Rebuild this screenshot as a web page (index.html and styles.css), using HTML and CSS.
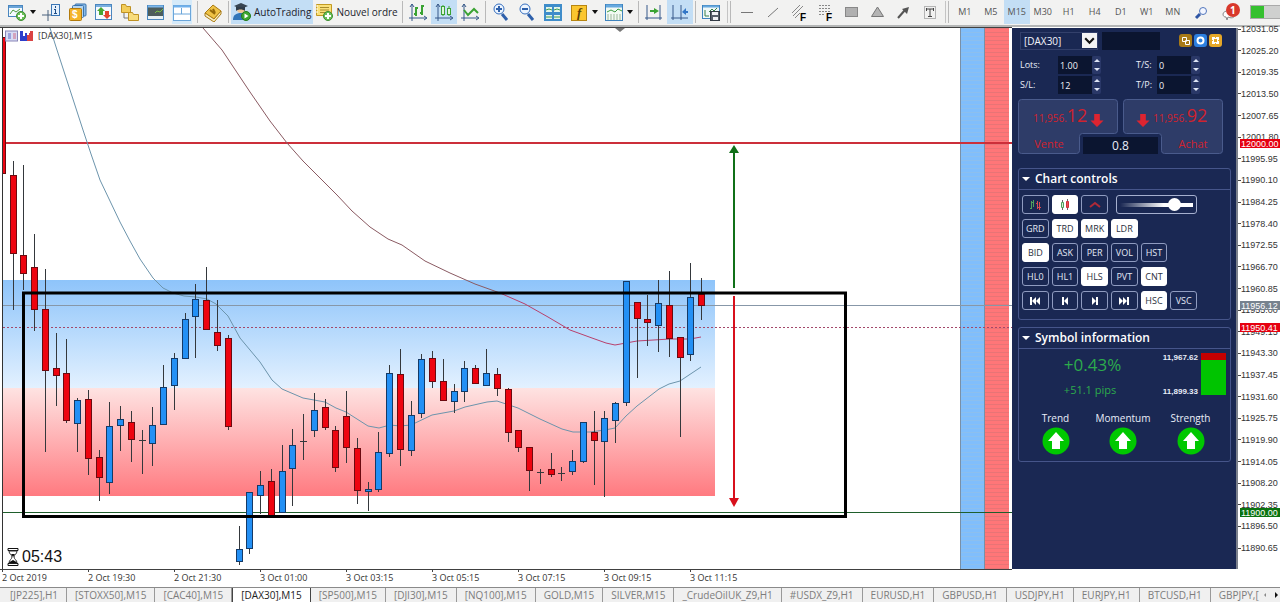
FILE: index.html
```html
<!DOCTYPE html>
<html lang="fr">
<head>
<meta charset="utf-8">
<title>[DAX30],M15</title>
<link rel="stylesheet" href="styles.css">
</head>
<body>
<header class="toolbar">
  <button class="tool wide" aria-label="Nouveau graphique"><svg class="ico" viewBox="0 0 20 20"><rect x="1.500" y="3.500" width="14" height="11" fill="#f4faff" stroke="#4a86bf"/><path d="M2 5h13" stroke="#6aa5d8" stroke-width="2"/><path d="M3 12l3-4 3 2 4-3" fill="none" stroke="#4a9b3c"/><circle cx="14" cy="14" r="4.500" fill="#6abf58" stroke="#3d8d32"/><path d="M14 11v6M11 14h6" stroke="#fff" stroke-width="2"/></svg><span class="caret"></span></button>
  <button class="tool" aria-label="Fenêtre de données"><svg class="ico" viewBox="0 0 20 20"><path d="M6 8v11M0 13h12" stroke="#48607c"/><rect x="9.500" y="2.500" width="8" height="11" fill="#e5f1fd" stroke="#3a76b5"/><path d="M13.500 7v4M13.500 4v2M12 11.500h3M12 7.500h2" stroke="#1d4c86"/></svg></button>
  <button class="tool" aria-label="Symboles"><svg class="ico" viewBox="0 0 20 20"><rect x="7" y="2" width="11" height="12" rx="1" fill="#8bbce8" stroke="#3973ad"/><rect x="4.500" y="3.500" width="11" height="12" rx="1" fill="#b6d6f1" stroke="#3973ad"/><rect x="1.500" y="6.500" width="12" height="12" rx="1" fill="#f4b429" stroke="#b37b0c"/><text x="4" y="16" class="glyph white">$</text></svg></button>
  <button class="tool" aria-label="Observation du marché"><svg class="ico" viewBox="0 0 20 20"><rect x="1.500" y="2.500" width="16" height="15" fill="#f5faff" stroke="#4a86bf"/><path d="M2 4h15" stroke="#79afe0" stroke-width="2"/><path d="M7 5l4 4H9v4H5V9H3z" fill="#48a634"/><path d="M13 17l4-4h-2V9h-4v4H9z" fill="#e3452f"/></svg></button>
  <button class="tool" aria-label="Navigateur"><svg class="ico" viewBox="0 0 20 20"><path d="M1.500 2.500h4l1 2h4v6h-9z" fill="#f3cd59" stroke="#bf9224"/><path d="M4 11v5h5" fill="none" stroke="#777"/><path d="M8.500 10.500h4l1 2h5v6h-10z" fill="#f8dc7c" stroke="#bf9224"/></svg></button>
  <button class="tool" aria-label="Boîte à outils"><svg class="ico" viewBox="0 0 20 20"><rect x="1.500" y="3.500" width="16" height="14" fill="#4d5d5c" stroke="#4d89bf"/><path d="M2 4.500h15" stroke="#7db7ea" stroke-width="2"/><path d="M9 11l2-2 3 1 3-3" fill="none" stroke="#7ac142"/><path d="M2 14h15v3H2z" fill="#e9f2f4"/></svg></button>
  <button class="tool boxed" aria-label="Testeur"><svg class="ico" viewBox="0 0 20 20"><rect x="1.500" y="3.500" width="17" height="15" fill="#fff" stroke="#6ba6da"/><path d="M2 4.500h16" stroke="#6eb0ec" stroke-width="2"/><path d="M2 12h16M9.500 6v6" stroke="#6ba6da"/></svg></button>
  <span class="sep"></span>
  <button class="tool" aria-label="MetaEditor"><svg class="ico" viewBox="0 0 20 20"><path d="M2 11l8-8 8 6-7 8z" fill="#eec245" stroke="#a97a12"/><path d="M2 11v3l9 6 7-8V9l-7 8z" fill="#f9eec0" stroke="#a97a12"/><path d="M7 8l5 4M10 7l2 4" stroke="#946909" stroke-width="2"/></svg></button>
  <span class="sep"></span>
  <button class="tool labelled on"><svg class="ico" viewBox="0 0 20 20"><circle cx="9" cy="7" r="4" fill="#f1c594"/><path d="M2 4l7-3 7 3-7 3z" fill="#374553"/><path d="M4 5v4c2-2 7-2 9 0V5" fill="#2f3c49"/><path d="M1 18c0-5 3-7 8-7s7 2 7 7z" fill="#3276b9"/><circle cx="14" cy="14" r="4.500" fill="#3da630" stroke="#227b1a"/><path d="M12.500 11.500l4 2.500-4 2.500z" fill="#fff"/></svg><span>AutoTrading</span></button>
  <button class="tool labelled"><svg class="ico" viewBox="0 0 20 20"><path d="M2.500 2.500h15v11h-15z" fill="#fae079" stroke="#c29a22"/><path d="M2 4h2M2 7h2M2 10h2" stroke="#fff"/><path d="M6 5.500h9M6 8h9M6 10.500h6" stroke="#a98c2c"/><circle cx="14" cy="14" r="4.500" fill="#6abf58" stroke="#3d8d32"/><path d="M14 11v6M11 14h6" stroke="#fff" stroke-width="2"/></svg><span>Nouvel ordre</span></button>
  <span class="sep"></span>
  <button class="tool" aria-label="Barres"><svg class="ico" viewBox="0 0 20 20"><path class="axes" d="M4 2v17M1 16h17M2 5l2-3 2 3M16 14l3 2-3 2"/><path d="M8 5v9M6 12h2M8 6h2M14 3v10M12 11h2M14 4h2" stroke="#3ba333" stroke-width="2" fill="none"/></svg></button>
  <button class="tool on" aria-label="Chandeliers"><svg class="ico" viewBox="0 0 20 20"><path class="axes" d="M4 2v17M1 16h17M2 5l2-3 2 3M16 14l3 2-3 2"/><path d="M9 3v11M15 4v10" stroke="#3ba333"/><rect x="7.500" y="4.500" width="3" height="8" fill="#dff5da" stroke="#3ba333"/><rect x="13.500" y="6.500" width="3" height="6" fill="#dff5da" stroke="#3ba333"/></svg></button>
  <button class="tool" aria-label="Ligne"><svg class="ico" viewBox="0 0 20 20"><path class="axes" d="M4 2v17M1 16h17M2 5l2-3 2 3M16 14l3 2-3 2"/><path d="M4 8l4 5 6-6 4 4" fill="none" stroke="#3ba333" stroke-width="2"/></svg></button>
  <span class="sep"></span>
  <button class="tool" aria-label="Zoom avant"><svg class="ico" viewBox="0 0 20 20"><path d="M11 12l5 6" stroke="#2e60ab" stroke-width="3"/><circle cx="8" cy="7" r="5" fill="#edf5ff" stroke="#356ebe"/><path d="M8 4v6M5 7h6" stroke="#2e60ab" stroke-width="2"/></svg></button>
  <button class="tool" aria-label="Zoom arrière"><svg class="ico" viewBox="0 0 20 20"><path d="M11 12l5 6" stroke="#2e60ab" stroke-width="3"/><circle cx="8" cy="7" r="5" fill="#edf5ff" stroke="#356ebe"/><path d="M5 7h6" stroke="#2e60ab" stroke-width="2"/></svg></button>
  <button class="tool" aria-label="Mosaïque"><svg class="ico" viewBox="0 0 20 20"><rect x="1" y="2" width="18" height="17" fill="#3f8dca"/><path d="M3 5h6v5H3zM11 5h6v5h-6zM3 13h6v4H3zM11 13h6v4h-6z" fill="#e4f5e8"/><path d="M3 8l3-1 3 1M11 8l3-1 3 1M3 15h6M11 15h6" fill="none" stroke="#3c9a54"/></svg></button>
  <button class="tool wide" aria-label="Indicateurs"><svg class="ico" viewBox="0 0 20 20"><rect x="2.500" y="3.500" width="15" height="15" fill="#fbc62f" stroke="#b78612"/><text x="8" y="15" class="glyph fx">f</text></svg><span class="caret"></span></button>
  <button class="tool wide" aria-label="Modèles"><svg class="ico" viewBox="0 0 20 20"><rect x="1.500" y="2.500" width="17" height="16" fill="#f2faf3" stroke="#3e83bd"/><path d="M2 4h16" stroke="#67a9df" stroke-width="3"/><path d="M3 10l4-2 4 2 3-3 4 2" fill="none" stroke="#3c9c40"/><path d="M3 13h15M3 15h15M3 17h15" stroke="#9db79c" stroke-dasharray="2 1"/></svg><span class="caret"></span></button>
  <span class="sep"></span>
  <button class="tool" aria-label="Décalage"><svg class="ico" viewBox="0 0 20 20"><path class="axes" d="M3 3v15M1 16h17M16 3v15"/><path d="M6 8h4V6l5 3-5 3v-2H6z" fill="#3ba333"/></svg></button>
  <button class="tool on" aria-label="Défilement"><svg class="ico" viewBox="0 0 20 20"><path class="axes" d="M3 3v15M1 16h17M11 3v15"/><path d="M18 9h-2V6l-4 4 4 3v-2h2z" fill="#3376c6"/></svg></button>
  <span class="sep"></span>
  <button class="tool" aria-label="Enregistrer le modèle"><svg class="ico" viewBox="0 0 20 20"><rect x="1.500" y="3.500" width="17" height="13" fill="#eff8f8" stroke="#3e83bd"/><path d="M2 4.500h16" stroke="#67a9df" stroke-width="2"/><path d="M4 8v6h4M8 10l3-3 2 2 3-3" fill="none" stroke="#3a804a"/><rect x="9.500" y="9.500" width="9" height="9" fill="#57606b" stroke="#333b45"/><path d="M11 10h6v3h-6zM12 15h5v3h-5z" fill="#f0f2f5"/></svg></button>
  <span class="grip"></span>
  <button class="tool" aria-label="Ligne horizontale"><svg class="ico" viewBox="0 0 20 20"><path d="M4 10.500h12" stroke="#777"/></svg></button>
  <button class="tool" aria-label="Ligne de tendance"><svg class="ico" viewBox="0 0 20 20"><path d="M5 15L15 6" stroke="#777"/></svg></button>
  <button class="tool" aria-label="Canal Fibonacci"><svg class="ico" viewBox="0 0 20 20"><path d="M3 11l8-8M4 14l10-10M6 16l5-5" stroke="#888"/><text x="11" y="19" class="glyph">F</text></svg></button>
  <button class="tool" aria-label="Retracement Fibonacci"><svg class="ico" viewBox="0 0 20 20"><path d="M4 3.500h12M4 6.500h12M4 9.500h12M4 12.500h6" stroke="#888" stroke-dasharray="2 1"/><text x="11" y="19" class="glyph">F</text></svg></button>
  <button class="tool" aria-label="Rectangle"><svg class="ico" viewBox="0 0 20 20"><rect x="4.500" y="5.500" width="12" height="9" fill="#b0b0b0" stroke="#888"/></svg></button>
  <button class="tool" aria-label="Triangle"><svg class="ico" viewBox="0 0 20 20"><path d="M10.500 5l6 9.500h-12z" fill="#b4b4b4" stroke="#777"/></svg></button>
  <button class="tool" aria-label="Flèche"><svg class="ico" viewBox="0 0 20 20"><path d="M5 16l7-8" stroke="#555" stroke-width="2"/><path d="M16 5l-2 7-5-5z" fill="#555"/></svg></button>
  <button class="tool" aria-label="Texte"><svg class="ico" viewBox="0 0 20 20"><rect x="5.500" y="4.500" width="11" height="12" fill="none" stroke="#777" stroke-dasharray="1 1"/><path d="M7 7h8M11 7v8M9 14.500h4M7.500 6v3M14.500 6v3" stroke="#444"/></svg></button>
  <span class="grip"></span>
  <button class="tool tf">M1</button><button class="tool tf">M5</button><button class="tool tf on">M15</button><button class="tool tf">M30</button><button class="tool tf">H1</button><button class="tool tf">H4</button><button class="tool tf">D1</button><button class="tool tf">W1</button><button class="tool tf">MN</button>
  <button class="tool search" aria-label="Rechercher"><svg class="ico" viewBox="0 0 20 20"><path d="M5 16l4-4" stroke="#2e55a4" stroke-width="3"/><circle cx="12" cy="9" r="3.500" fill="#f3f6ff" stroke="#5276bc"/></svg></button>
  <button class="tool mail" aria-label="1 message"><svg class="ico" viewBox="0 0 20 20"><path d="M2 12c0-4 12-5 12 0s-5 4-7 3l-1 3-1-3c-2 0-3-1-3-3z" fill="#fff" stroke="#888"/></svg><span class="badge">1</span></button>
  <span class="meter"></span>
</header>

<main class="workspace">
  <section class="chart">
    <svg class="plot" id="plot" viewBox="0 27 1012 543" preserveAspectRatio="none" role="img" aria-label="DAX30, 15 minutes">
      <defs>
        <linearGradient id="up" x1="0" y1="0" x2="0" y2="1"><stop offset="0" stop-color="#8ec4fa"/><stop offset="1" stop-color="#e3f1ff"/></linearGradient>
        <linearGradient id="down" x1="0" y1="0" x2="0" y2="1"><stop offset="0" stop-color="#fee3e2"/><stop offset="1" stop-color="#ff7a80"/></linearGradient>
        <pattern id="ladderBlue" width="24" height="4" patternUnits="userSpaceOnUse"><rect width="24" height="4" fill="#80befc"/><rect width="24" height="1" fill="#8cbfee"/></pattern>
        <pattern id="ladderRed" width="24" height="4" patternUnits="userSpaceOnUse"><rect width="24" height="4" fill="#ff7678"/><rect width="24" height="1" fill="#e87476"/></pattern>
      </defs>
      <rect x="3" y="280" width="712" height="108" fill="url(#up)"/>
      <rect x="3" y="388" width="712" height="108" fill="url(#down)"/>
      <rect x="960" y="28" width="25" height="541" fill="url(#ladderBlue)"/>
      <rect x="985" y="28" width="24" height="541" fill="url(#ladderRed)"/>
      <path d="M960.500 28v541M984.500 28v541" stroke="#7890a8"/>
      <path d="M3 305.500h1009" stroke="#8797a8"/>
      <path d="M3 327.500h1009" stroke="#a4486a" stroke-dasharray="2 2"/>
      <path d="M3 143h1009" stroke="#cc2f3a" stroke-width="2"/>
      <path d="M3 512.500h1009" stroke="#1f5f2c"/>
      <path d="M50 28L57 50 83 130 91 154 100 180 110 201 120 222 130 241 140 259 153 278 163 288 173 293 184 296 196 297 207 299 216 304 228 316 240 338 260 362 272 380 282 389 303 398 325 402 336 408 346 412 368 426 379 428 390 425 400 426 411 425 432 415 454 411 465 407 487 402 497 401 518 408 540 419 562 429 573 432 590 432 605 430 615 428 626 416 637 406 659 389 669 384 680 381 701 367" fill="none" stroke="#6c94ac"/>
      <path d="M203 28L222 50 236 71 250 92 270 121 287 143 303 161 320 178 337 195 352 211 370 227 388 239 402 245 425 261 450 273 475 284 500 293" fill="none" stroke="#8a5a62"/>
      <path d="M500 293L525 304 548 317 570 330 592 338 606 343 615 345 637 341 670 339 690 339 701 337" fill="none" stroke="#b8406c"/>
      <g id="candles"></g>
      <rect x="23.500" y="293" width="822" height="223.500" fill="none" stroke="#000" stroke-width="3"/>
      <path d="M734 150v138" stroke="#107018" stroke-width="2"/><path d="M734 145l5 8h-10z" fill="#107018"/>
      <path d="M734 296v204" stroke="#d8101c" stroke-width="2"/><path d="M734 507l5-9h-10z" fill="#d8101c"/>
      <path d="M615 28h10l-5 4z" fill="#777"/>
      <path d="M0 27.500h1012M0 569.500h1012" stroke="#404040"/><path d="M2.500 28v541" stroke="#333"/>
    </svg>
    <div class="chart-title">
      <svg class="mini" viewBox="0 0 28 12"><rect x=".5" y="1" width="12" height="10" fill="#d7dcf4" stroke="#8a86b8"/><path d="M3 4h3M3 6h3M3 8h3" stroke="#5d69c9"/><path d="M8 4h3M8 6h3M8 8h3" stroke="#d06a86"/><path d="M15 1h3v5h2V3h2v8h-7z" fill="#2d3ecb"/><path d="M22 5h2V3h1V1h3v10h-6z" fill="#d94343"/></svg>
      <span>[DAX30],M15</span>
    </div>
    <div class="timer">
      <svg class="glass" viewBox="0 0 12 20"><path d="M1 1.500h10v2H1zM1 16.500h10v2H1z" fill="#fff" stroke="#111"/><path d="M2 4c0 3 3 4 3 6s-3 3-3 6h8c0-3-3-4-3-6s3-3 3-6z" fill="#fff" stroke="#333"/><path d="M4 7h4l-2 3zM2 16c1-2 3-2 4-3 1 1 3 1 4 3z" fill="#111"/></svg>
      <span>05:43</span>
    </div>
  </section>

  <aside class="panel">
    <form class="order">
      <div class="symbol-row">
        <label class="symbol"><span class="sr">Symbole</span><select><option>[DAX30]</option></select><svg class="drop" viewBox="0 0 14 14"><path d="M3 5l4 4 4-4" fill="none" stroke="#111" stroke-width="2"/></svg></label>
        <input class="field filter" aria-label="Filtre">
        <span class="badges">
          <button type="button" class="badge-btn brown" aria-label="Copier"><svg viewBox="0 0 13 13"><path d="M3.500 3.500h4v4h-4zM6.500 6.500h4v4h-4z" fill="none" stroke="#fff"/></svg></button>
          <button type="button" class="badge-btn blue" aria-label="Réglages"><svg viewBox="0 0 13 13"><circle cx="6.500" cy="6.500" r="3" fill="none" stroke="#fff" stroke-width="2"/></svg></button>
          <button type="button" class="badge-btn gold" aria-label="Agrandir"><svg viewBox="0 0 13 13"><path d="M3 3h3v1h1V3h3v3H9v1h1v3H7V9H6v1H3V7h1V6H3z" fill="#fff"/><rect x="5" y="5" width="3" height="3" fill="#e5a728"/></svg></button>
        </span>
      </div>
      <div class="params">
        <label for="lots">Lots:</label><span class="spin"><input class="field" id="lots" value="1.00"><i class="steps"></i></span>
        <label for="ts">T/S:</label><span class="spin"><input class="field" id="ts" value="0"><i class="steps"></i></span>
        <label for="sl">S/L:</label><span class="spin"><input class="field" id="sl" value="12"><i class="steps"></i></span>
        <label for="tp">T/P:</label><span class="spin"><input class="field" id="tp" value="0"><i class="steps"></i></span>
      </div>
      <div class="deal">
        <button type="button" class="side sell">
          <svg class="shape" viewBox="0 0 100 56"><path d="M3.500.5h93q3 0 3 3v28q0 3-3 3h-32q-3 0-3 3v14q0 3-3 3h-55q-3 0-3-3v-48q0-3 3-3z"/></svg>
          <span class="quote"><span>11,956.</span><b>12</b><svg class="arrow" viewBox="0 0 14 16"><path d="M4 1h6v7h4l-7 7-7-7h4z"/></svg></span><span class="verb">Vente</span>
        </button>
        <button type="button" class="side buy">
          <svg class="shape" viewBox="0 0 100 56"><path d="M3.500.5h93q3 0 3 3v48q0 3-3 3h-55q-3 0-3-3v-14q0-3-3-3h-32q-3 0-3-3v-28q0-3 3-3z"/></svg>
          <span class="quote"><svg class="arrow" viewBox="0 0 14 16"><path d="M4 1h6v7h4l-7 7-7-7h4z"/></svg><span>11,956.</span><b>92</b></span><span class="verb">Achat</span>
        </button>
        <output class="spread">0.8</output>
      </div>
    </form>

    <section class="group">
      <h2>Chart controls</h2>
      <div class="keys">
        <button class="key" aria-label="Barres"><svg viewBox="0 0 12 12"><path d="M2.500 2v8M1 9.500h1M3 3.500h2M4.500 1v7" stroke="#4fa05c" fill="none"/><path d="M8.500 2v8M7 4.500h1M10.500 3v8M9 8.500h3" stroke="#d64a52" fill="none"/></svg></button>
        <button class="key lit" aria-label="Chandeliers"><svg viewBox="0 0 12 12"><path d="M3.500 1v10M8.500 0v11" stroke="#666"/><path d="M2.500 3.500h2v5h-2z" fill="#d8f0d8" stroke="#4fa05c"/><path d="M7.500 2.500h2v6h-2z" fill="#e85058" stroke="#d03038"/></svg></button>
        <button class="key" aria-label="Ligne"><svg viewBox="0 0 12 12"><path d="M1 8l5-4 5 4" fill="none" stroke="#b02a38" stroke-width="2"/></svg></button>
        <span class="slider"><input type="range" aria-label="Zoom" min="0" max="100" value="80"></span>
        <button class="key c1">GRD</button><button class="key lit">TRD</button><button class="key lit">MRK</button><button class="key lit">LDR</button>
        <button class="key lit c1">BID</button><button class="key">ASK</button><button class="key">PER</button><button class="key">VOL</button><button class="key">HST</button>
        <button class="key c1">HL0</button><button class="key">HL1</button><button class="key lit">HLS</button><button class="key">PVT</button><button class="key lit">CNT</button>
        <button class="key c1" aria-label="Début"><svg viewBox="0 0 12 12"><path d="M1 2h2v8H1zM7 2v8L3 6zM11 2v8L7 6z" fill="#fff"/></svg></button>
        <button class="key" aria-label="Précédent"><svg viewBox="0 0 12 12"><path d="M3 2h2v8H3zM9 2v8L5 6z" fill="#fff"/></svg></button>
        <button class="key" aria-label="Suivant"><svg viewBox="0 0 12 12"><path d="M7 2h2v8H7zM3 2v8l4-4z" fill="#fff"/></svg></button>
        <button class="key" aria-label="Fin"><svg viewBox="0 0 12 12"><path d="M9 2h2v8H9zM5 2v8l4-4zM1 2v8l4-4z" fill="#fff"/></svg></button>
        <button class="key lit">HSC</button><button class="key">VSC</button>
      </div>
    </section>

    <section class="group info">
      <h2>Symbol information</h2>
      <div class="stats">
        <div class="change"><span class="percent">+0.43%</span><span class="pips">+51.1 pips</span></div>
        <div class="range"><span>11,967.62</span><span>11,899.33</span></div>
        <div class="bar"></div>
      </div>
      <div class="signals">
        <div class="signal">Trend<svg viewBox="0 0 28 28"><circle cx="14" cy="14" r="13.500"/><path d="M14 5l8 9h-4v8h-8v-8H6z"/></svg></div>
        <div class="signal">Momentum<svg viewBox="0 0 28 28"><circle cx="14" cy="14" r="13.500"/><path d="M14 5l8 9h-4v8h-8v-8H6z"/></svg></div>
        <div class="signal">Strength<svg viewBox="0 0 28 28"><circle cx="14" cy="14" r="13.500"/><path d="M14 5l8 9h-4v8h-8v-8H6z"/></svg></div>
      </div>
    </section>
  </aside>

  <div class="prices">
    <div class="scale"><span>12031.05</span><span>12025.20</span><span>12019.35</span><span>12013.50</span><span>12007.65</span><span>12001.80</span><span>11995.95</span><span>11990.10</span><span>11984.25</span><span>11978.40</span><span>11972.55</span><span>11966.70</span><span>11960.85</span><span>11955.00</span><span>11949.15</span><span>11943.30</span><span>11937.45</span><span>11931.60</span><span>11925.75</span><span>11919.90</span><span>11914.05</span><span>11908.20</span><span>11902.35</span><span>11896.50</span><span>11890.65</span></div>
    <span class="tag red resistance">12000.00</span>
    <span class="tag grey bid">11956.12</span>
    <span class="tag red pivot">11950.41</span>
    <span class="tag green support">11900.00</span>
  </div>
</main>

<div class="times"><span>2 Oct 2019</span><span>2 Oct 19:30</span><span>2 Oct 21:30</span><span>3 Oct 01:00</span><span>3 Oct 03:15</span><span>3 Oct 05:15</span><span>3 Oct 07:15</span><span>3 Oct 09:15</span><span>3 Oct 11:15</span></div>

<nav class="tabs">
  <div class="tab-list"><a href="#">[JP225],H1</a><a href="#">[STOXX50],M15</a><a href="#">[CAC40],M15</a><a href="#" class="current">[DAX30],M15</a><a href="#">[SP500],M15</a><a href="#">[DJI30],M15</a><a href="#">[NQ100],M15</a><a href="#">GOLD,M15</a><a href="#">SILVER,M15</a><a href="#">_CrudeOilUK_Z9,H1</a><a href="#">#USDX_Z9,H1</a><a href="#">EURUSD,H1</a><a href="#">GBPUSD,H1</a><a href="#">USDJPY,H1</a><a href="#">EURJPY,H1</a><a href="#">BTCUSD,H1</a><a href="#">GBPJPY,[</a></div>
  <button class="scroll" aria-label="Onglets précédents"><svg viewBox="0 0 6 8"><path d="M4 2v4L2 4z" fill="#888"/></svg></button>
  <button class="scroll next" aria-label="Onglets suivants"><svg viewBox="0 0 6 8"><path d="M1 1v6l3-3z" fill="#111"/></svg></button>
</nav>
<script src="chart.js"></script>
</body>
</html>
```

FILE: styles.css
```css
* { box-sizing: border-box; }
body {
  margin: 0;
  min-height: 100vh;
  display: flex;
  flex-direction: column;
  overflow: hidden;
  background: #fff;
  color: #222;
  font: 10px/12px "Open Sans", "Noto Sans", sans-serif;
}
button { font: inherit; color: inherit; border: 0; padding: 0; background: none; }
h2 { margin: 0; }
.sr { position: absolute; width: 1px; height: 1px; overflow: hidden; clip-path: inset(50%); }

/* Toolbar */
.toolbar {
  display: flex;
  align-items: center;
  height: 27px;
  padding: 0 0 1px 4px;
  background: #f2f2f1;
  border-bottom: 2px solid #b4b6b6;
}
.tool { flex: none; display: flex; align-items: center; justify-content: center; width: 26px; height: 24px; }
.tool.wide { width: 35px; justify-content: flex-start; padding-left: 3px; gap: 3px; }
.tool.labelled { width: auto; gap: 2px; padding: 0 2px 0 1px; font-size: 10px; color: #1c1c2c; }
.tool.on { background: #c3def5; }
.tool.boxed { width: 20px; margin: 0 3px; background: #d5eaf9; }
.tool.tf { font-size: 9px; color: #555; }
.tool.search { margin-left: 2px; }
.ico { width: 20px; height: 20px; flex: none; }
.axes { fill: none; stroke: #37598a; stroke-width: 1; }
.glyph { font: bold 10px "Liberation Sans", sans-serif; }
.glyph.white { fill: #fff; }
.glyph.fx { font: italic bold 13px "Liberation Serif", serif; fill: #5a3e05; }
.caret { border: 3px solid transparent; border-top: 4px solid #111; border-bottom: 0; }
.sep { flex: none; width: 1px; height: 22px; margin: 0 2px; background: #b9b9b9; }
.grip { flex: none; width: 10px; height: 22px; background: linear-gradient(90deg, transparent 3px, #c4c4c4 3px 4px, transparent 4px 6px, #b9b9b9 6px 7px, transparent 7px); }
.mail { position: relative; width: 32px; margin-left: 1px; }
.badge { position: absolute; left: 11px; top: 3px; width: 14px; height: 14px; border-radius: 50%; background: #d8382b; color: #fff; font-weight: 700; line-height: 14px; }
.meter { flex: 1; height: 14px; margin-left: 3px; border: 1px solid #aaa; border-right: 0; background: linear-gradient(90deg, #35c02f 13px, #cfd0cf 13px); }

/* Chart */
.workspace { display: flex; flex: 1; }
.chart { position: relative; flex: 1; min-width: 0; }
.plot { display: block; width: 100%; height: 543px; }
.chart-title { position: absolute; left: 5px; top: 3px; display: flex; align-items: center; gap: 5px; font-size: 9px; color: #333; }
.mini { width: 28px; height: 12px; }
.timer { position: absolute; left: 7px; bottom: 3px; display: flex; align-items: center; gap: 3px; font: 16px/20px "Liberation Sans", sans-serif; color: #111; }
.glass { width: 12px; height: 20px; }
.wick { stroke: #34383c; }
.body-up { fill: #2390f5; stroke: #153a66; }
.body-down { fill: #ee0410; stroke: #6c0a10; }

/* Trading panel */
.panel {
  flex: none;
  width: 226px;
  margin: 1px 0;
  padding: 0 5px 0 6px;
  background: #1a2853;
  border-right: 2px solid #7c818c;
  color: #e9edf8;
}
.symbol-row { display: flex; align-items: center; padding: 2px 9px 0 2px; height: 24px; }
.symbol { position: relative; display: flex; width: 78px; border: 1px solid #33406b; }
.symbol select { flex: 1; min-width: 0; height: 16px; padding: 0 16px 0 3px; border: 0; appearance: none; background: transparent; color: #f2f4fa; font: 10px/16px "Open Sans", sans-serif; }
.drop { position: absolute; right: 0; top: 0; width: 15px; height: 15px; background: #f4f4f4; pointer-events: none; }
.field { border: 0; padding: 0 2px; min-width: 0; background: #0b1530; color: #f2f4fa; font: 9px/16px "Open Sans", sans-serif; }
.filter { width: 58px; height: 18px; margin-left: 4px; }
.badges { display: flex; gap: 2px; margin-left: auto; padding-bottom: 1px; }
.badge-btn { width: 13px; height: 13px; border-radius: 3px; }
.badge-btn svg { display: block; }
.brown { background: #a87a17; }
.blue { background: #2c7fe0; }
.gold { background: #e5a728; }
.params { display: grid; grid-template-columns: 37px 77px 20px 44px; gap: 2px 1px; align-items: center; padding: 4px 0 0 2px; font-size: 9px; }
.spin { display: flex; width: 43px; }
.spin .field { width: 34px; height: 18px; }
.steps { width: 9px; background: #2a3868; display: grid; border-radius: 2px; }
.steps::before, .steps::after { content: ""; place-self: center; border: 3px solid transparent; }
.steps::before { border-top: 0; border-bottom: 3px solid #dfe5f5; }
.steps::after { border-bottom: 0; border-top: 3px solid #dfe5f5; }
.deal { position: relative; display: grid; grid-template-columns: 100px 100px; gap: 5px; margin-top: 5px; }
.side { position: relative; display: flex; flex-direction: column; height: 56px; color: #d0222e; }
.shape { position: absolute; inset: 0; }
.shape path { fill: #2e3c68; stroke: #4a5b8c; }
.quote { position: relative; display: flex; align-items: baseline; height: 35px; padding: 6px 0 0 15px; line-height: 20px; font-size: 10px; }
.quote b { font-weight: 400; font-size: 18px; }
.arrow { width: 14px; height: 16px; align-self: center; margin: 0 3px; padding-top: 1px; fill: #dd2430; }
.buy .quote { padding-left: 10px; }
.verb { position: relative; width: 62px; text-align: center; font-size: 11px; line-height: 20px; }
.buy .verb { align-self: flex-end; width: 60px; }
.spread { position: absolute; left: 65px; top: 38px; width: 75px; height: 17px; background: #0b1530; text-align: center; font-size: 12px; line-height: 17px; }
.group { border: 1px solid #46558a; border-radius: 3px; margin: 13px 0 7px; }
.group + .group { margin-top: 7px; }
.group h2 { display: flex; align-items: center; gap: 5px; height: 21px; padding-left: 3px; border-bottom: 1px solid #46558a; font-size: 12px; font-weight: 600; color: #fff; }
.group h2::before { content: ""; border: 4px solid transparent; border-top: 4px solid #fff; border-bottom: 0; }
.keys { display: grid; grid-template-columns: repeat(6, 1fr); grid-auto-rows: 19px; gap: 5px 3px; width: 178px; padding: 5px 0 9px 3px; }
.key { display: grid; place-items: center; border: 1px solid #8f9bc0; border-radius: 3px; font-size: 9px; color: #e3e8f5; }
.key svg { width: 12px; height: 12px; }
.lit { background: #fff; border-color: #fff; color: #2a2f3d; }
.c1 { grid-column: 1; }
.slider { grid-column: 4 / 7; margin-left: 5px; display: flex; align-items: center; padding: 0 3px; border: 1px solid #a6b0cf; border-radius: 3px; }
.slider input { width: 100%; height: 14px; margin: 0; appearance: none; background: #fff; clip-path: none; background: linear-gradient(90deg, transparent, #fff 60%) center / 100% 4px no-repeat; }
.slider input::-webkit-slider-thumb { appearance: none; width: 13px; height: 13px; border-radius: 50%; background: #fff; }
.stats { display: flex; justify-content: flex-end; gap: 3px; padding: 4px 4px 0; height: 48px; }
.change { display: flex; flex-direction: column; gap: 4px; width: 55px; margin-right: 41px; color: #2cab4c; white-space: nowrap; }
.percent { font-size: 17px; line-height: 24px; }
.pips { font-size: 11px; line-height: 18px; }
.range { display: flex; flex-direction: column; justify-content: space-between; font: 8px/10px "Liberation Sans", sans-serif; font-weight: 700; }
.bar { width: 25px; height: 42px; background: linear-gradient(#c40000 7px, #00c400 7px); }
.signals { display: flex; justify-content: space-between; padding: 14px 12px 6px 9px; font-size: 10px; line-height: 14px; }
.signal { display: flex; flex-direction: column; align-items: center; gap: 2px; width: 55px; }
.signal svg { width: 28px; height: 28px; }
.signal circle { fill: #00c800; }
.signal path { fill: #fff; }

/* Price scale */
.prices { position: relative; flex: none; width: 42px; font: 9px/12px "Liberation Sans", sans-serif; color: #333; }
.scale { display: flex; flex-direction: column; justify-content: space-between; height: 531px; margin-top: -4px; }
.scale span { display: flex; align-items: center; }
.scale span::before { content: ""; width: 3px; height: 1px; background: #444; }
.tag { position: absolute; left: 2px; right: 0; padding-left: 1px; height: 9px; line-height: 10px; color: #fff; }
.tag.red { background: #e60010; }
.tag.grey { background: #76828e; }
.tag.green { background: #0a720f; }
.resistance { top: 112px; }
.bid { top: 274px; }
.pivot { top: 296px; }
.support { top: 481px; }

/* Time scale and tabs */
.times { display: grid; grid-auto-flow: column; grid-auto-columns: 86px; justify-content: start; height: 17px; padding-left: 2px; font-size: 9px; line-height: 12px; color: #333; }
.times span::before { content: ""; display: block; width: 1px; height: 2px; background: #444; }
.tabs { display: flex; height: 15px; background: #f0f0f0; border-top: 1px solid #8a8a8a; }
.tab-list { display: flex; flex: 1; min-width: 0; padding-left: 2px; overflow: hidden; }
.tabs a { flex: none; padding: 1px 8px 0; border-right: 1px solid #999; color: #7c7c7c; text-decoration: none; line-height: 13px; }
.tabs a.current { background: #fff; color: #222; border-left: 1px solid #444; border-right-color: #444; }
.tabs a:last-child { padding-right: 0; border-right: 0; }
.scroll { width: 10px; display: grid; place-items: center; }
.scroll.next { width: 6px; margin-left: 4px; }
.scroll svg { width: 6px; height: 8px; }
```

FILE: chart.js
```js
// One entry per bar: direction (u, d, or - for a doji), body top, body bottom, high, low.
const bars = [
  ["d",37,173,37,173],["d",175,253,161,310],["d",255,273,165,290],["d",267,309,234,331],
  ["d",309,370,269,452],["d",368,375,333,406],["d",373,420,339,423],["u",400,423,398,452],
  ["d",399,458,390,475],["d",457,477,450,501],["u",426,482,402,494],["u",419,425,406,451],
  ["d",422,439,411,462],["-",440,440,430,474],["u",425,443,407,466],["u",387,424,365,424],
  ["u",358,385,353,410],["u",319,358,313,359],["u",299,316,284,358],["d",300,329,267,330],
  ["d",332,345,300,351],["d",338,426,335,430],["u",549,561,526,565],["u",492,548,492,554],
  ["u",485,495,471,514],["d",481,515,469,515],["u",471,512,445,512],["u",445,468,429,506],
  ["-",441,441,414,460],["u",410,430,393,437],["d",407,427,399,430],["d",430,467,426,472],
  ["d",416,447,391,463],["d",448,490,438,504],["u",489,491,482,511],["u",452,489,432,492],
  ["u",373,453,365,457],["d",374,449,349,466],["u",415,450,401,456],["u",359,413,354,418],
  ["d",358,381,351,388],["d",381,400,359,401],["u",391,401,384,413],["u",368,391,361,402],
  ["d",368,383,365,384],["u",373,385,349,386],["d",374,388,368,396],["d",389,432,388,442],
  ["d",430,447,430,452],["d",447,470,447,491],["-",472,472,469,484],["d",469,474,453,477],
  ["-",473,473,467,481],["u",461,471,450,475],["u",422,461,422,463],["d",432,440,411,485],
  ["u",418,441,411,497],["u",403,420,402,443],["u",281,402,281,406],["d",302,318,302,378],
  ["d",319,322,295,346],["u",303,325,280,352],["d",305,338,271,357],["d",337,357,337,437],
  ["u",297,354,263,361],["d",294,305,278,320]
];

const layer = document.getElementById("candles");
const add = (name, attrs) => {
  const el = document.createElementNS("http://www.w3.org/2000/svg", name);
  for (const key in attrs) el.setAttribute(key, attrs[key]);
  layer.appendChild(el);
};

bars.forEach(([dir, top, bottom, high, low], i) => {
  const x = Math.floor(2.3 + i * 10.76) + 0.5;
  add("path", { class: "wick", d: `M${x} ${high}V${low}` });
  if (dir === "-") {
    add("path", { class: "wick", d: `M${x - 3.5} ${top + 0.5}h7` });
  } else {
    const left = i === 0 ? x : x - 3;
    add("rect", { class: dir === "u" ? "body-up" : "body-down", x: left, y: top + 0.5, width: x + 3 - left, height: bottom - top });
  }
});
```
